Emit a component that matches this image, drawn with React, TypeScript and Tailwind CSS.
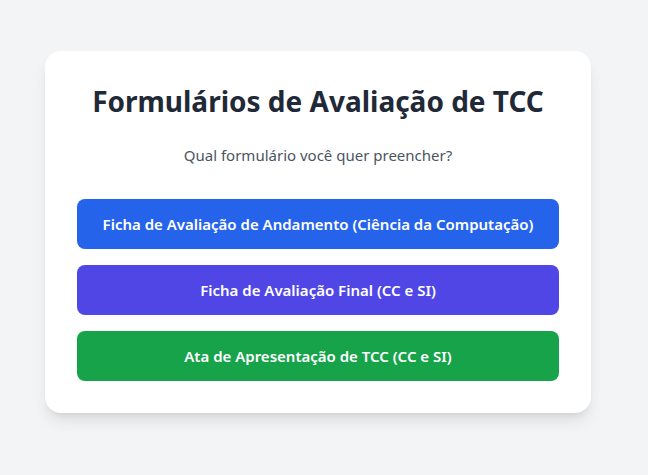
const forms = [
  { label: "Ficha de Avaliação de Andamento (Ciência da Computação)", color: "bg-[#2563eb] hover:bg-[#1d4ed8]" },
  { label: "Ficha de Avaliação Final (CC e SI)", color: "bg-[#4f46e5] hover:bg-[#4338ca]" },
  { label: "Ata de Apresentação de TCC (CC e SI)", color: "bg-[#16a34a] hover:bg-[#15803d]" },
];

const App = () => {
  return (
    <div
      className="min-h-screen bg-[#f3f4f6] flex justify-center pr-[12px] pt-[51px]"
      style={{ fontFamily: '"Noto Sans", "Open Sans", sans-serif' }}
    >
      <div className="w-[546px] h-fit bg-white rounded-2xl shadow-lg p-8 text-center">
        <h1 className="text-[28px] leading-9 font-bold text-[#1f2937] mb-6 whitespace-nowrap">
          Formulários de Avaliação de TCC
        </h1>
        <p className="text-[15px] leading-6 text-[#4b5563] mb-8">Qual formulário você quer preencher?</p>
        <div className="flex flex-col gap-4">
          {forms.map((f) => (
            <button
              key={f.label}
              className={`${f.color} h-[50px] w-full rounded-lg text-white font-semibold text-[15px] transition-colors`}
            >
              {f.label}
            </button>
          ))}
        </div>
      </div>
    </div>
  );
};

export default App;
